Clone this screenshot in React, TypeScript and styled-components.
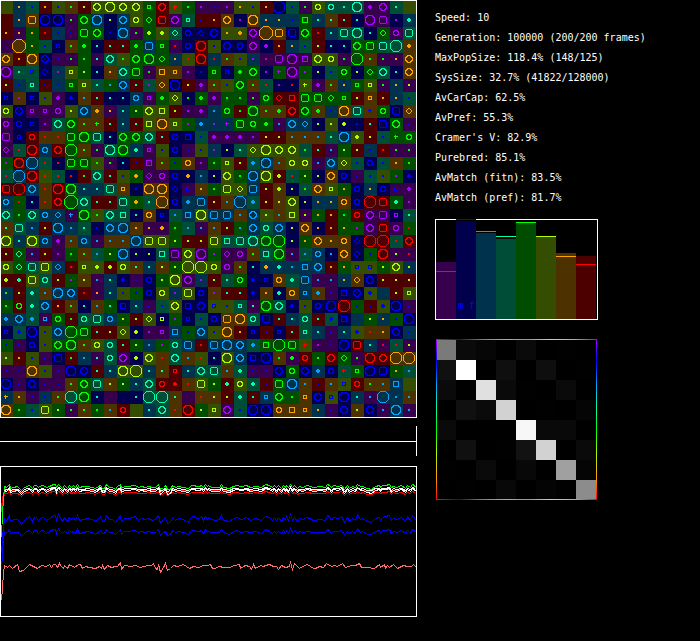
import React from "react";
import styled, { createGlobalStyle } from "styled-components";

type Hue = "p" | "b" | "c" | "t" | "g" | "y" | "o" | "r";

const BRIGHT: Record<Hue, string> = {
  p: "#aa00ff",
  b: "#0000ff",
  c: "#00a5ff",
  t: "#00ffaf",
  g: "#00ff00",
  y: "#afff00",
  o: "#ffa500",
  r: "#ff0000",
};

const DARK: Record<Hue, string> = {
  p: "#37004d",
  b: "#00004d",
  c: "#00314d",
  t: "#004d37",
  g: "#004d00",
  y: "#344d00",
  o: "#4d3200",
  r: "#4d0000",
};

const HUES: Hue[] = ["p", "b", "c", "t", "g", "y", "o", "r"];

/* Each site: background hue, marker hue, marker shape. "__" is an empty site. */
const SITES = [
  "y__ co. tb. ro. yb. og. ry. yyc yyO yyc yyc ggs rrc yr+ gg. pp. pb. pp. yo. yb. ro. bbX tb. pg. yyo tto tt. ttO pp+ ppc tt. y__",
  "r__ co. ooq bbO bbO pg. ggc ccO by. ccc yyo ggd rrq ppc tts rb. ro. ooc bp. ooO co. co. cb. ggm ct. ot. rt. bt. ppO ppq bp. ct+",
  "ro. po. go. rr. cb. pb. ggq ggc bb. ccO pg. gy+ yy+ ttd bbo bbd bbc yo. yo+ ppc ooZ ooq bbq ggc rr. ct. ttq ttO bt. ggd ppo ttq",
  "p__ ooZ go. tb. bbs og. gg+ bt. rt. rt. gg+ ccq ggs pr. bbo rrO yb. bbc bbo ppc bp+ ro. co. tb. ry. bt. bt. ggc ggq ttq ttX oo+",
  "ooc ro. ooO bbc pb. pg. gg. pt. ttc yg. ggc ggO ggd co. yr. rrO cr. og. yb. cp. pp. ppq ppO ppm yyc yyo pg. ggX og. pg. po. ooc",
  "ppO tt. tbs bbd cp. yys gy. bt. oo. ttc ggq pg. oom oos pp. bb. ggs bbs gg+ ggc bp. gp- ppO gp. by. tb. ggo by. ggd ttc bt. ooc",
  "ry. cb. tts rb. cb. ggs yys tt. gc. ccc rt. tp. ood bbO ry. pp+ og. yb. ggc og. tr. bp. br. yy- pp+ og. co. ggs yys pg. co. py.",
  "bbs op. bbs yb. pp+ bb+ oc. rt. bt. bt. cco pps gg+ yyd bg. gg+ pp+ gg. gg. pg. ggo rrd rrm ggq ggq ggd ggs ry. oos ro. co. tb.",
  "yyo bbc pps pps ppo yy. ccc oo+ po. ct. gy. yyc yym ry. pp. pp+ cc. ggo rg. ggO og. og+ rrc ggc og+ cb. ooO ttq ob- ggo bbq ood",
  "ppo bbo bbs pp. ttc ggc og. og- rt. ct. rt. yym ooO yys gp. cc+ cp. cp- ggq ggo gg+ pc. ccc ccd by. yy. by+ bb. rt. bbq ggc pb.",
  "ppq bbs rro or. or. ggq ggO ttq bt. ggc ggc ttc rt. bbo bbm tb. pp+ pp+ pp+ pp. ry. ry. oc. oc. oc. tt. ccO yy+ ry. tb. gg- ggo",
  "ppd tr. rrO cco rrc ggX og. pg. ttO ggO ct+ pps yb. bbo pb. yb. cp. by. tt. yyd yyO yyc yyc tg. rt. pc. gy. ry. cb. rr. pg. pg.",
  "gp. rrO ccX tr. br. ggq ggq yg. pg. bt. rb. ppm og. gb. ooo pp. gg. yys ry. tc+ ccO oc. yyo yyo pc. ccc yyd tb. bbo tb. oo. gg.",
  "tr. ccX rrO yr. tr. br. rg. ttc rt. yb. go+ ppd ppo bbo bo+ cc. by. yyc gg. ccO yyO ry+ tr. gy. by. ooc bbo pb. tb. yb. gp. bb+",
  "rrq rrX ccc or. rrO ggO ct. ct. ttq oos bb. ooO ooO bbd pbs oo. gg. yyq yyd ccq ry. oy+ by. tg. ooc yys go. bbo co. bbo pbs pp+",
  "cco gr. bt. or. rrc ggZ ttc rt. rt. ttq go+ tt. ooX bbo cc+ ccq ry. oc. ccX tc+ ry. oy. yyc by. co. co. ooo bbo rrX rrq gt+ pp.",
  "ttc gg. ttc cco ccd pc- ggO yg. ttc ttm bt. ooo bbs tc. ccm yyO ccq ccq oc. ccc yy. oc. yym py. go. ro. gg. rro ppc ppq bps tt.",
  "ot. ttq cc. ry. ccO cc. tt. bb. ccc ccO oo. po. po+ gg. tc. pc. oc. ry. gc. ccc tto ccc by. ooc bo. ro. go. gp. ppc rrq ppo gr.",
  "yyO ct. yyO cco pp+ oc. cco pc. oc. oc. ccO yyq yyq gy. ry. ry. yyq ttm ttq ttO ggO ggX by. go. ooc oo. ooo bbd rrX rrX tr. rrc",
  "ry. gtd pc. ry. pp. gg. og. tc. gy. ccO by. by. ttm ppq yyc ppO gp. ppd ppo og. ttm ggO pc. tc. cco bc. ooc bbd gb. rrO py. pr.",
  "yyo gtd ttq yyq ccd rr. yys yy+ ry+ yyo ot. ct. oy. gy. yyX yyX yyo ppo og. bt. co+ ct+ cc. ccm ccc ro. go. ybs ybs gy. yyc cy.",
  "ry+ rt+ yyq tto ry. gp. oy. pc. ct. bb+ pb. bbo gy. yyO ppc cp. ry. tt. ggo bb+ bbs ooo tt+ ccq pc. pc. co. ood bbc ry. ry. ry.",
  "cg. ry. tt+ oc. ccO ccc rr. po. ct. yb. gb. bbo yyo cp. yyq bbo op. rt. rt. bb+ oo. bt+ ooo ccs oc+ pb. bbm bbc yb+ c__ ry. yys",
  "gg. rgo tt+ ccc ro. og. bt. oc. gt. bbm ct. pb. tb. yyc bbm bbc ybs yb. tts pt. ggO ttc bb+ yb. bbo bbO rrX gb. rb. yb+ bbO pb.",
  "cc+ ccc tc+ pcs ggo rg. tto ttq cco gy. ry. yyd bys gp. bbs tb. bbo ooq ooO tto bbq rt. ct. tto rt. tb+ bbm c__ gy. co. gb. bbO",
  "bbs tb+ bbO yb. ccc ggX ggq rt. ry. yyd by+ pp. pps ccm gb. ccc yb. ooO ro. bbs rb. bbs rt. tts ct. pb. ct. yb+ or. oo. bbc cb.",
  "gb. pb. bbo yb. ggc ggO og. yyo tto rt. gy. cc. gp. tto ccq rr. ccq ccO ccc tc+ ggm ggX ggq yr- pp. pb. bbO rrq ct. pr. tr. py.",
  "yy. ro. yb. pb. bbq rg. cc. pt. tto ppc by+ yyc or. ttc oc. yr. bt. yyO ccc bbm bbO og. pg+ rro gg. rrc ggd pg. rrO rrc ooX ooX",
  "pb. pb. ooO yb. pb. bbO bbc rt. ct. yyO yyX ct. ot. rrs ct. ttc ttq oc. tt+ pb. pb. bbc ggo bbc cc+ bbo tr- ggs bbO bbq go. tc.",
  "bbO pb. bbc pb. pb. og. ggc ttq oy. gy. ct. ttc rro rr+ or. yyq gy. rt+ yyo tt+ rb. ggq ccO oc. rb. oc. ybs rro og. oc. ccm y__",
  "co- oo. pb. cb. og. ttX ggO bt. p__ b__ bt. ttX ttX ot. p__ or. oy. ry. tt+ rt. ccs ggc gg. oos bbc ybs bbO ct. pc. ccX cc. oc.",
  "ooO gg. tb. yyq gy. pg. og. gg. oc. rro y__ ct. ttc or. rrO gy. yys ppc tb. bbO bbO ooo oom oos co. pb. bbc oy. bbc pc. ccO pc.",
].map((row) => row.split(" "));

/* Closed outline on the pixel grid with each corner cut by a straight diagonal. */
const octagon = (size: number, corner: number) => {
  const a = 6.5 - Math.ceil(size / 2);
  const e = size - 1 - corner * 2;
  return `M${a + corner} ${a}h${e}l${corner} ${corner}v${e}l${-corner} ${corner}h${-e}l${-corner} ${-corner}v${-e}z`;
};

/* The same outline with its corners cut in one-pixel stairs. */
const stairs = (size: number, corner: number) => {
  const a = 6.5 - Math.ceil(size / 2);
  const e = size - 1 - corner * 2;
  const n = corner;
  return [
    `M${a + corner} ${a}h${e}`,
    "v1h1".repeat(n),
    `v${e}`,
    "h-1v1".repeat(n),
    `h${-e}`,
    "v-1h-1".repeat(n),
    `v${-e}`,
    "h1v-1".repeat(n),
    "z",
  ].join("");
};

const SOLIDS: Record<string, string> = {
  ".": "M5 5h2v2h-2z",
  "+": "M5 4h2v1h1v2h-1v1h-2v-1h-1v-2h1z",
  "-": "M5 4h1v1h2v1h-2v2h-1v-2h-1v-1h1z",
};

const RINGS: Record<string, string> = {
  s: octagon(4, 0),
  m: octagon(6, 0),
  q: octagon(8, 1),
  o: stairs(6, 1),
  d: octagon(6, 2),
  c: stairs(8, 2),
  O: stairs(10, 2),
  X: octagon(12, 3),
  Z: octagon(14, 4),
};

const STATS: [string, string][] = [
  ["Speed", "10"],
  ["Generation", "100000 (200/200 frames)"],
  ["MaxPopSize", "118.4% (148/125)"],
  ["SysSize", "32.7% (41822/128000)"],
  ["AvCarCap", "62.5%"],
  ["AvPref", "55.3%"],
  ["Cramer's V", "82.9%"],
  ["Purebred", "85.1%"],
  ["AvMatch (fitn)", "83.5%"],
  ["AvMatch (pref)", "81.7%"],
];

const BARS = [
  { level: 57, mark: 47 },
  { level: 98, mark: 99 },
  { level: 86, mark: 87 },
  { level: 80, mark: 82 },
  { level: 96, mark: 96 },
  { level: 82, mark: 82 },
  { level: 66, mark: 62 },
  { level: 63, mark: 54 },
];

const MATCHES = [
  [122, 10, 6, 0, 10, 0, 1, 0],
  [16, 255, 0, 15, 0, 14, 0, 1],
  [10, 0, 224, 10, 1, 0, 10, 0],
  [0, 16, 10, 210, 0, 1, 0, 5],
  [10, 0, 0, 0, 247, 9, 9, 0],
  [0, 16, 0, 1, 18, 210, 0, 10],
  [1, 0, 10, 0, 8, 0, 160, 5],
  [0, 1, 0, 8, 0, 4, 1, 140],
];

/* History samples as x,y pairs, three units to a pixel. */
const parse = (s: string) => s.split(" ").map((p) => p.split(",").map(Number));

const SWING = parse(
  "12,-1 18,4 21,0 26,-10 31,7 38,2 50,0 56,6 62,17 68,8 78,-3 88,-7 95,6 102,-6 108,-6 114,5 122,-6 130,-5 138,5 148,-3 158,-10 164,-12 169,5 175,-13 181,-2 187,6 193,-4 200,6 206,-5 212,1 218,-4 226,4 232,-10 238,4 250,0 262,-3 275,2 284,8 300,-8 307,6 312,6 319,-10 327,2 336,1 344,11 352,0 359,-10 364,8 371,-2 384,-3 398,-6 405,-7 414,3 424,-1 434,1 444,-3 455,3 464,1 475,-10 481,14 490,1 496,-4 502,14 510,10 516,-5 524,3 535,-2 550,2 565,9 572,-6 580,-7 590,-2 598,-3 604,-7 609,4 614,-9 620,0 624,-4 634,2 646,3 656,1 664,-10 670,3 686,8 699,-2 708,-5 722,0 737,-4 749,3 764,-3 782,4 796,-9 808,-4 816,4 822,-4 829,5 835,-4 842,6 848,-5 854,4 859,-7 864,5 871,-13 877,3 883,-6 890,6 896,-1 907,2 920,-4 940,3 959,0 974,3 980,-10 987,-7 992,5 1000,-4 1014,-2 1022,-8 1033,11 1040,-4 1048,7 1056,-2 1066,4 1072,-13 1079,0 1087,-2 1102,8 1114,10 1126,-2 1136,-5 1141,4 1147,-6 1156,-7 1166,-10 1173,5 1179,-3 1189,1 1204,-5 1216,7 1222,-7 1229,4 1236,-10 1241,-5 1246,3"
);

const SYSTEM = parse(
  "3,540 6,500 9,460 13,436 20,442 26,436 36,445 50,433 56,452 68,449 80,438 88,431 100,437 112,444 122,436 138,439 146,433 152,442 158,431 165,431 171,440 176,428 181,436 188,445 193,434 200,444 206,433 222,440 235,432 240,433 245,444 255,437 268,440 284,444 296,438 302,443 307,434 312,446 320,436 334,441 345,438 352,438 359,427 364,446 371,436 390,438 404,435 420,440 440,434 452,435 458,428 464,445 470,448 475,433 481,455 490,440 496,430 502,450 510,445 518,434 530,438 550,433 566,445 580,438 595,440 610,434 620,435 630,431 636,443 646,445 654,437 672,440 686,440 702,434 716,433 721,445 734,436 746,437 752,446 758,433 766,444 780,436 790,438 796,434 808,433 819,437 828,438 835,448 844,436 856,440 867,437 871,427 877,448 883,430 896,443 907,438 921,433 940,445 946,445 958,437 969,440 979,430 992,438 1002,435 1012,438 1027,428 1034,442 1054,435 1064,434 1078,430 1084,441 1099,442 1121,443 1136,431 1141,441 1152,431 1156,443 1161,434 1167,442 1180,433 1192,445 1208,436 1222,437 1234,437 1240,433 1247,440"
);

const toLine = (points: number[][]) =>
  points.map(([x, y]) => `${Math.round(x / 3) + 0.5},${Math.round((y - 138) / 3) + 0.5}`).join(" ");

const swingLine = (base: number, gain: number, start: number) =>
  toLine([[3, start], [6, (start + base) / 2], ...SWING.map(([x, d]) => [x, base + d * gain])]);

const TRACES = [
  { color: "#ff6e6e", points: toLine(SYSTEM) },
  { color: "#0000ff", points: swingLine(335, 0.75, 450) },
  { color: "#0000ff", points: swingLine(296, 1, 400) },
  { color: "#ff0000", points: swingLine(218, 0.5, 275) },
  { color: "#ff0000", points: swingLine(210, 0.4, 260) },
  { color: "#00ff00", points: swingLine(199, 0.65, 350) },
  { color: "#ffffff", points: swingLine(206, 0.5, 248).split(" ").slice(2).join(" ") },
  { color: "#ffffff", points: swingLine(211, 0.7, 248).split(" ").slice(2).join(" ") },
];

const GlobalStyle = createGlobalStyle`
  body {
    margin: 0;
    background: #000;
    color: #fff;
    font-family: "DejaVu Sans Mono", "Liberation Mono", monospace;
    font-size: 10px;
    line-height: 20px;
  }
`;

const Page = styled.main`
  display: grid;
  grid-template-columns: minmax(0, 417fr) minmax(0, 283fr);
  align-items: start;
`;

const World = styled.section`
  display: flex;
  flex-direction: column;
`;

const Drawing = styled.svg`
  display: block;
  width: 100%;
  height: auto;
  shape-rendering: crispEdges;
`;

const Timeline = styled.div`
  display: flex;
  align-items: center;
  height: 30px;
  margin: 8px 0 10px;
  box-sizing: border-box;
  border-right: 1px solid #fff;
`;

const TimelineAxis = styled.hr`
  flex: 1;
  margin: 0;
  border: 0;
  border-top: 1px solid #fff;
`;

const Report = styled.aside`
  display: flex;
  flex-direction: column;
  align-items: flex-start;
  padding: 8px 0 0 18px;
`;

const StatList = styled.ul`
  list-style: none;
  margin: 0 0 11px;
  padding: 0;
`;

const Stat = styled.li`
  white-space: nowrap;
`;

const BarChart = styled.div`
  display: flex;
  align-items: flex-end;
  height: 99px;
  padding-right: 1px;
  border: 1px solid #fff;
  margin-bottom: 19px;
`;

const BarSlot = styled.div`
  position: relative;
  display: flex;
  align-items: flex-end;
  width: 20px;
  height: 100%;
`;

const Bar = styled.div<{ $hue: Hue; $level: number }>`
  width: 100%;
  height: ${(p) => p.$level}px;
  background: ${(p) => DARK[p.$hue]};
`;

const Mark = styled.div<{ $hue: Hue; $level: number }>`
  position: absolute;
  left: 0;
  right: 0;
  bottom: ${(p) => p.$level}px;
  height: 1px;
  background: ${(p) => BRIGHT[p.$hue]};
`;

const SexLabels = styled.div`
  position: absolute;
  left: 2px;
  right: 1px;
  bottom: 3px;
  display: flex;
  justify-content: space-between;
  color: ${BRIGHT.b};
`;

const SPECTRUM = HUES.map((h) => BRIGHT[h]).join(", ");

const MatrixFrame = styled.div`
  position: relative;
  margin-left: 1px;
  padding: 1px 1px 0 0;

  &::after {
    content: "";
    position: absolute;
    inset: 0;
    background:
      linear-gradient(to right, ${SPECTRUM}) top / 100% 1px no-repeat,
      linear-gradient(to right, ${SPECTRUM}) bottom / 100% 1px no-repeat,
      linear-gradient(to bottom, ${SPECTRUM}) left / 1px 100% no-repeat,
      linear-gradient(to bottom, ${SPECTRUM}) right / 1px 100% no-repeat;
  }
`;

const Matrix = styled.div`
  display: grid;
  grid-template-columns: repeat(8, 20px);
  grid-auto-rows: 20px;
`;

const MatrixCell = styled.div<{ $shade: number }>`
  background: rgb(${(p) => p.$shade}, ${(p) => p.$shade}, ${(p) => p.$shade});
`;

function Marker({ code, x, y }: { code: string; x: number; y: number }) {
  const color = BRIGHT[code[1] as Hue];
  const shape = code[2];
  if (SOLIDS[shape]) {
    return <path d={SOLIDS[shape]} fill={color} transform={`translate(${x} ${y})`} />;
  }
  if (RINGS[shape]) {
    return <path d={RINGS[shape]} fill="none" stroke={color} transform={`translate(${x} ${y})`} />;
  }
  return null;
}

export default function App() {
  return (
    <>
      <GlobalStyle />
      <Page>
        <World>
          <Drawing viewBox="0 0 417 418" role="img" aria-label="Population lattice">
            {SITES.map((row, j) =>
              row.map((code, i) => (
                <rect
                  key={`${i}-${j}`}
                  x={i * 13}
                  y={1 + j * 13}
                  width="13"
                  height="13"
                  fill={DARK[code[0] as Hue]}
                />
              ))
            )}
            {SITES.map((row, j) =>
              row.map((code, i) => <Marker key={`${i}-${j}`} code={code} x={i * 13} y={1 + j * 13} />)
            )}
            <rect x="0.5" y="0.5" width="416" height="417" fill="none" stroke="#fff" />
          </Drawing>
          <Timeline>
            <TimelineAxis />
          </Timeline>
          <Drawing viewBox="0 0 417 151" role="img" aria-label="History">
            <rect x="0.5" y="0.5" width="416" height="150" fill="none" stroke="#fff" />
            {TRACES.map((t, i) => (
              <polyline key={i} points={t.points} fill="none" stroke={t.color} />
            ))}
          </Drawing>
        </World>
        <Report>
          <StatList>
            {STATS.map(([name, value]) => (
              <Stat key={name}>
                {name}: {value}
              </Stat>
            ))}
          </StatList>
          <BarChart>
            {BARS.map((bar, i) => (
              <BarSlot key={HUES[i]}>
                <Bar $hue={HUES[i]} $level={bar.level} />
                <Mark $hue={HUES[i]} $level={bar.mark} />
                {HUES[i] === "b" && (
                  <SexLabels>
                    <span>m</span>
                    <span>f</span>
                  </SexLabels>
                )}
              </BarSlot>
            ))}
          </BarChart>
          <MatrixFrame>
            <Matrix>
              {MATCHES.flat().map((shade, i) => (
                <MatrixCell key={i} $shade={shade} />
              ))}
            </Matrix>
          </MatrixFrame>
        </Report>
      </Page>
    </>
  );
}
